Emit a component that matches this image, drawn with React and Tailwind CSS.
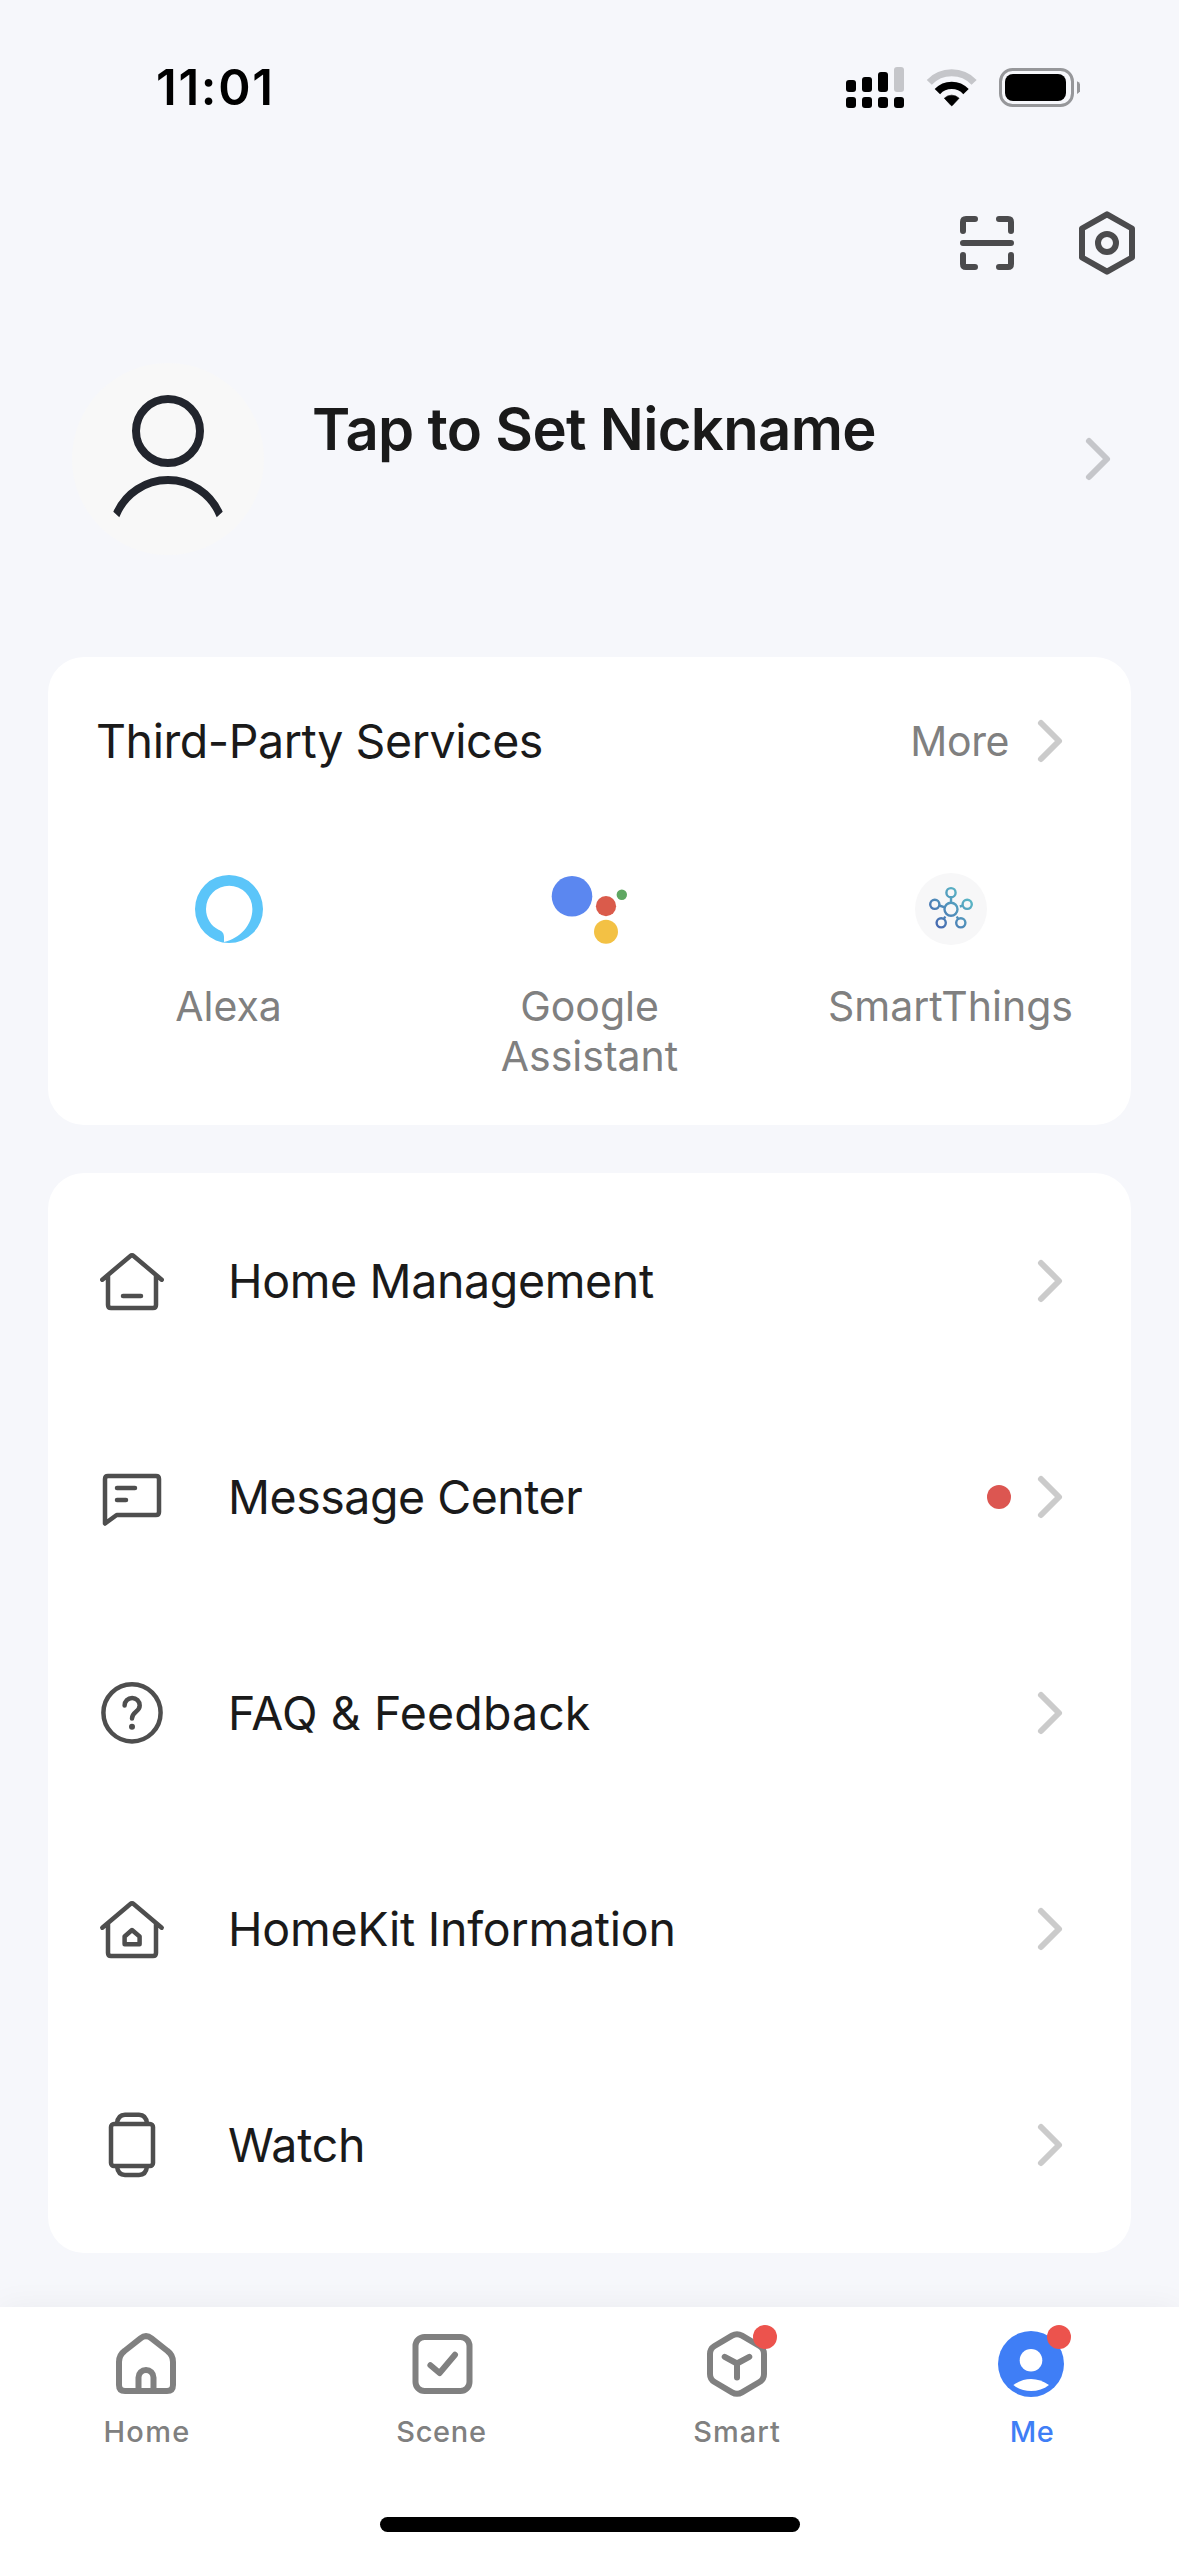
function StatusBar() {
  return (
    <div className="flex h-[176px] items-center justify-between pr-[99px] pl-[156px]">
      <span className="text-[49px] leading-[60px] font-semibold tracking-[1.7px] text-black">11:01</span>
      <svg className="h-[48px] w-[240px]" viewBox="840 64 240 48" fill="none">
        <g fill="#000">
          <rect x="846" y="80" width="10" height="12" rx="3" />
          <rect x="862" y="77" width="10" height="15" rx="3" />
          <rect x="878" y="72" width="10" height="20" rx="3" />
          <rect x="894" y="67" width="10" height="25" rx="3" fill="#c5c6ca" />
          <rect x="846" y="97" width="10" height="11" rx="3" />
          <rect x="862" y="97" width="10" height="11" rx="3" />
          <rect x="878" y="97" width="10" height="11" rx="3" />
          <rect x="894" y="97" width="10" height="11" rx="3" />
        </g>
        <path d="M929.3 82.3A31 31 0 0 1 974.1 82.3" stroke="#c5c6ca" strokeWidth="7" />
        <path d="M937.4 91.6A19.6 19.6 0 0 1 966 91.6" stroke="#000" strokeWidth="7.4" />
        <path d="M944.3 98.2A10.5 10.5 0 0 1 959.1 98.2L952.4 105.4Q951.7 106.1 951 105.4Z" fill="#000" stroke="#000" strokeWidth="0.6" />
        <rect x="1000.5" y="69.5" width="72" height="36" rx="12" stroke="#96979a" strokeWidth="3" />
        <rect x="1005" y="74" width="61" height="27" rx="8" fill="#000" />
        <path d="M1077 81.3C1082.3 83.5 1082.3 91.7 1077 93.9Z" fill="#96979a" />
      </svg>
    </div>
  );
}

function Toolbar() {
  return (
    <div className="flex h-[134px] items-center justify-end gap-12 pr-9">
      <svg className="size-[72px]" viewBox="951 207 72 72" fill="none" stroke="#4b4b4d" strokeWidth="6" strokeLinecap="round" strokeLinejoin="round">
        <path d="M963 231V222Q963 219 966 219H975M999 219H1008Q1011 219 1011 222V231M963 255V264Q963 267 966 267H975M999 267H1008Q1011 267 1011 264V255M963 243H1011" />
      </svg>
      <svg className="size-[72px]" viewBox="1071 207 72 72" fill="none" stroke="#4b4b4d" strokeWidth="6" strokeLinejoin="round">
        <path d="M1107 214.4L1132 228.5V257.5L1107 271.6L1082 257.5V228.5Z" />
        <circle cx="1107" cy="243" r="9" />
      </svg>
    </div>
  );
}

function Chevron({ className = "text-[#cbcbcb]" }) {
  return (
    <svg className={"h-[48px] w-[30px] shrink-0 " + className} viewBox="0 0 30 48" fill="none" stroke="currentColor" strokeWidth="6" strokeLinecap="round" strokeLinejoin="round">
      <path d="M6 6L24 24L6 42" />
    </svg>
  );
}

function Profile() {
  return (
    <div className="flex h-[298px] items-center pr-[66px] pl-[72px]">
      <svg className="size-[192px] rounded-full bg-[#f8f8f8]" viewBox="72 363 192 192" fill="none">
        <circle cx="168" cy="431" r="32" stroke="#22252d" strokeWidth="8" />
        <path d="M113.3 511.7A59.8 59.8 0 0 1 222.7 511.7L216.7 517.3A52.3 52.3 0 0 0 119.3 517.3Z" fill="#22252d" />
      </svg>
      <h1 className="ml-[48px] flex-1 pb-[60px] text-[58px] leading-[70px] font-semibold tracking-[-0.66px] text-[#1a1a1a]">Tap to Set Nickname</h1>
      <Chevron className="text-[#c5c6ca]" />
    </div>
  );
}

function AlexaIcon() {
  return (
    <svg className="size-[72px]" viewBox="193 873 72 72">
      <path
        fill="#5bc5f9"
        fillRule="evenodd"
        d="M229 875A34 34 0 1 1 229 943A34 34 0 1 1 229 875ZM206 909A23.2 23.2 0 0 1 252.4 909C252.4 925 240 938.5 224 942V937C224 933 222 931 218.5 929.7C211 926 206 918 206 909Z"
      />
    </svg>
  );
}

function GoogleAssistantIcon() {
  return (
    <svg className="h-[72px] w-[84px]" viewBox="548 873 84 72">
      <circle cx="572" cy="896.3" r="20.3" fill="#5b87f0" />
      <circle cx="606" cy="906.2" r="10.1" fill="#da5b4b" />
      <circle cx="621.8" cy="894.8" r="5.2" fill="#5fa762" />
      <circle cx="606" cy="931.7" r="12" fill="#f3c144" />
    </svg>
  );
}

function SmartThingsIcon() {
  return (
    <svg className="size-[72px] rounded-full bg-[#f7f7f8]" viewBox="915 873 72 72" fill="none" stroke="url(#hub)" strokeWidth="2.4">
      <defs>
        <linearGradient id="hub" gradientUnits="userSpaceOnUse" x1="936" y1="926" x2="968" y2="894">
          <stop offset="0" stopColor="#4669b0" />
          <stop offset="1" stopColor="#5bbac6" />
        </linearGradient>
      </defs>
      <circle cx="951" cy="909.3" r="6.5" />
      <circle cx="951" cy="892.7" r="4.6" />
      <circle cx="934.8" cy="904.3" r="4.6" />
      <circle cx="967.2" cy="904.3" r="4.6" />
      <circle cx="941.2" cy="922.8" r="4.6" />
      <circle cx="960.8" cy="922.8" r="4.6" />
      <path d="M951.05 897.3L951 902.8M939.3 905.5L944.8 907.3M962.8 905.6L959.8 906.5M943.8 919L945.3 916.5M958.2 919L956.8 916.5" />
    </svg>
  );
}

function Service({ icon, children }) {
  return (
    <div className="flex flex-col items-center gap-9">
      {icon}
      <span className="w-[250px] text-center text-[41px] leading-[50px] text-[#808080]">{children}</span>
    </div>
  );
}

function ThirdPartyServices() {
  return (
    <section className="mx-12 mt-[49px] h-[468px] rounded-[36px] bg-white">
      <div className="flex h-[168px] items-center pr-[66px] pl-[48px]">
        <h2 className="flex-1 text-[46.5px] leading-[60px] tracking-[-0.43px] text-[#1a1a1a]">Third-Party Services</h2>
        <span className="mr-[26px] text-[41px] leading-[50px] tracking-[-0.4px] text-[#808080]">More</span>
        <Chevron />
      </div>
      <div className="grid grid-cols-3 pt-12">
        <Service icon={<AlexaIcon />}>Alexa</Service>
        <Service icon={<GoogleAssistantIcon />}>Google Assistant</Service>
        <Service icon={<SmartThingsIcon />}>SmartThings</Service>
      </div>
    </section>
  );
}

const HOUSE = "M102.3 1279.7L130.1 1256.2Q132 1254.6 133.9 1256.2L161.7 1279.7M108 1275V1305Q108 1308 111 1308H153Q156 1308 156 1305V1275";

function RowIcon({ children }) {
  return (
    <svg className="size-[72px] shrink-0" viewBox="96 1245 72 72" fill="none" stroke="#4e4e4e" strokeWidth="4.5" strokeLinecap="round" strokeLinejoin="round">
      {children}
    </svg>
  );
}

const ROWS = [
  {
    label: "Home Management",
    tracking: "tracking-[-0.36px]",
    icon: <path d={HOUSE + "M123 1296H141"} />,
  },
  {
    label: "Message Center",
    tracking: "tracking-[-0.48px]",
    dot: true,
    icon: <path d="M105 1307.5V1263Q105 1260 108 1260H156Q159 1260 159 1263V1296Q159 1299 156 1299H116.7ZM117 1272H135M117 1284H126" />,
  },
  {
    label: "FAQ & Feedback",
    tracking: "tracking-[0.12px]",
    icon: (
      <>
        <circle cx="132" cy="1280.8" r="28.6" />
        <path d="M124.6 1273.5A7.5 7.5 0 0 1 139.7 1273.5C139.7 1280 132 1279.500 132 1286.5" />
        <circle cx="132" cy="1294.7" r="3" fill="#4e4e4e" stroke="none" />
      </>
    ),
  },
  {
    label: "HomeKit Information",
    tracking: "tracking-[-0.25px]",
    icon: <path d={HOUSE + "M124.6 1288.5L132 1282L139.6 1288.5V1296.2H124.6Z"} />,
  },
  {
    label: "Watch",
    tracking: "tracking-[-0.2px]",
    icon: (
      <>
        <rect x="111" y="1260" width="42" height="42" rx="3" />
        <path d="M117 1259.5Q118 1250.8 125 1250.8H139Q146 1250.8 147 1259.5M117 1302.5Q118 1311 125 1311H139Q146 1311 147 1302.5" />
      </>
    ),
  },
];

function Menu() {
  return (
    <section className="mx-12 mt-12 rounded-[36px] bg-white">
      {ROWS.map(({ label, tracking, icon, dot }) => (
        <div key={label} className="flex h-[216px] items-center pr-[66px] pl-[48px]">
          <RowIcon>{icon}</RowIcon>
          <span className={"ml-[60px] flex-1 text-[46.5px] leading-[60px] text-[#1a1a1a] " + tracking}>{label}</span>
          {dot && <span className="mr-6 size-6 rounded-full bg-[#dc5651]" />}
          <Chevron />
        </div>
      ))}
    </section>
  );
}

function Tab({ label, className, badge, children }) {
  return (
    <div className={"flex flex-col items-center pt-[21px] " + className}>
      <div className="relative size-[72px]">
        {children}
        {badge && <span className={"absolute -top-[3px] size-6 rounded-full bg-[#ec534d] " + badge} />}
      </div>
      <span className="mt-[14px] text-[29px] leading-[36px] font-medium">{label}</span>
    </div>
  );
}

function TabBar() {
  const stroke = { fill: "none", stroke: "currentColor", strokeWidth: 6, strokeLinecap: "round", strokeLinejoin: "round" };
  return (
    <nav className="flex h-[249px] flex-col justify-between bg-white pb-6 text-[#808080] shadow-[0_0_30px_rgba(0,0,0,0.05)]">
      <div className="grid grid-cols-[294px_295px_296px_294px]">
        <Tab label="Home" className="tracking-[1.3px]">
          <svg className="size-[72px]" viewBox="111 2328 72 72" {...stroke}>
            <path d="M119 2362Q119 2355 124.5 2351L140.5 2338.3Q146 2334 151.5 2338.3L167.5 2351Q173 2355 173 2362V2385Q173 2391 167 2391H125Q119 2391 119 2385Z" />
            <path d="M138.5 2390V2377.5A7.5 7.5 0 0 1 153.5 2377.5V2390" />
          </svg>
        </Tab>
        <Tab label="Scene" className="tracking-[0.7px]">
          <svg className="size-[72px]" viewBox="405.5 2328 72 72" {...stroke}>
            <rect x="415" y="2337" width="54" height="54" rx="9" />
            <path d="M429.9 2365.3L439.1 2373L454.5 2354.7" />
          </svg>
        </Tab>
        <Tab label="Smart" className="tracking-[1px]" badge="left-[52px]">
          <svg className="size-[72px]" viewBox="701 2328 72 72" {...stroke}>
            <path d="M732 2335.7Q737 2332.8 742 2335.7L759.5 2346Q764 2348.7 764 2354V2374Q764 2379.3 759.5 2382L742 2392.3Q737 2395.2 732 2392.3L714.5 2382Q710 2379.3 710 2374V2354Q710 2348.7 714.5 2346Z" />
            <path d="M724.7 2356.8L737 2363.5L749.3 2356.8M737 2363.5V2377.5" />
          </svg>
        </Tab>
        <Tab label="Me" className="tracking-[0.4px] text-[#3f7ef6]" badge="left-[51px]">
          <svg className="size-[72px]" viewBox="996 2328 72 72">
            <circle cx="1031" cy="2364" r="33" fill="#3f7ef6" />
            <circle cx="1031" cy="2360.2" r="11.3" fill="#fff" />
            <path d="M1013.4 2385C1024 2377 1038 2377 1049 2385C1039 2393 1023 2393 1013.4 2385Z" fill="#fff" />
          </svg>
        </Tab>
      </div>
      <div className="h-[15px] w-[420px] self-center rounded-full bg-black" />
    </nav>
  );
}

export default function App() {
  return (
    <div className="flex h-[2556px] w-[1179px] flex-col justify-between overflow-hidden bg-[#f6f7fb] font-['Inter',sans-serif]">
      <main>
        <StatusBar />
        <Toolbar />
        <Profile />
        <ThirdPartyServices />
        <Menu />
      </main>
      <TabBar />
    </div>
  );
}
